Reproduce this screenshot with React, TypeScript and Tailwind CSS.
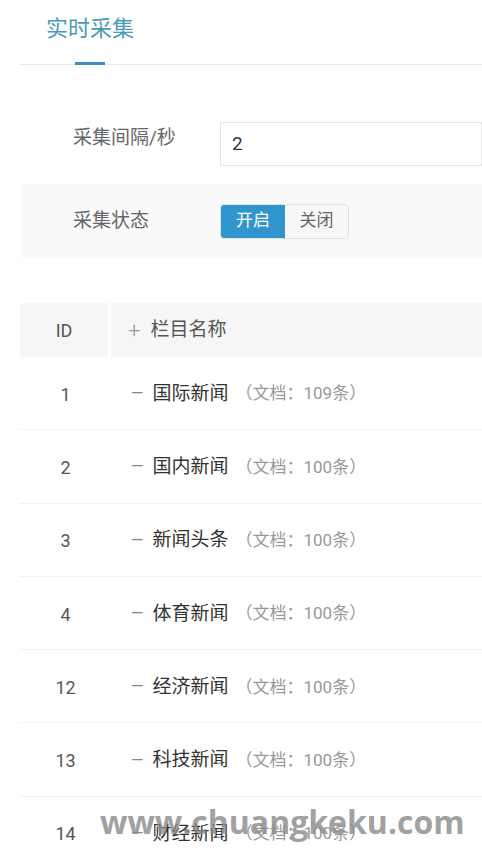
import React from 'react';

const rows = [
  { id: 1, name: '国际新闻', count: 109 },
  { id: 2, name: '国内新闻', count: 100 },
  { id: 3, name: '新闻头条', count: 100 },
  { id: 4, name: '体育新闻', count: 100 },
  { id: 12, name: '经济新闻', count: 100 },
  { id: 13, name: '科技新闻', count: 100 },
  { id: 14, name: '财经新闻', count: 100 },
];

const App = () => {
  return (
    <div
      className="relative h-[850px] w-[482px] overflow-hidden bg-white pl-[20px]"
      style={{ fontFamily: 'Roboto, "Noto Sans CJK SC", sans-serif' }}
    >
      {/* tabs */}
      <div className="flex h-[65px] border-b border-[#e8e8e8]">
        <div className="relative ml-[26px] pt-[14px]">
          <span className="text-[22px] leading-[30px] text-[#4a9bb8]">实时采集</span>
          <div className="absolute bottom-[-1px] left-1/2 h-[3px] w-[30px] -translate-x-1/2 bg-[#3d8fbf]" />
        </div>
      </div>

      {/* form */}
      <div className="mt-[45px]">
        <div className="flex h-[74px] items-start">
          <div className="w-[200px] pl-[53px] pt-[14px] text-[19px] leading-[28px] text-[#666]">采集间隔/秒</div>
          <div className="mt-[12px] flex h-[44px] flex-1 items-center border border-[#e6e6e6] pl-[11px] text-[19px] text-[#333]">
            2
          </div>
        </div>
        <div className="flex h-[74px] items-center bg-[#fafafa]">
          <div className="w-[200px] pl-[53px] text-[19px] text-[#666]">采集状态</div>
          <div className="flex h-[35px] overflow-hidden rounded-[4px] border border-[#e0e0e0]">
            <div className="flex w-[64px] items-center justify-center bg-[#2f95cc] text-[17px] text-white">开启</div>
            <div className="flex w-[63px] items-center justify-center bg-[#f7f7f7] text-[17px] text-[#666]">关闭</div>
          </div>
        </div>
      </div>

      {/* table */}
      <div className="mt-[45px]">
        <div className="flex h-[54px] gap-[3px]">
          <div className="flex w-[88px] items-center justify-center bg-[#f6f6f6] text-[18px] text-[#555]">ID</div>
          <div className="flex flex-1 items-center bg-[#f6f6f6] pl-[17px] text-[19px] text-[#555]">
            <span className="mr-[10px] text-[22px] font-light text-[#999]">+</span>
            栏目名称
          </div>
        </div>
        {rows.map((row) => (
          <div key={row.id} className="flex h-[73.3px] items-center border-b border-[#f2f2f2] pt-[2px]">
            <div className="w-[91px] text-center text-[18px] text-[#555]">{row.id}</div>
            <div className="flex items-center pl-[20px]">
              <span className="mr-[9px] text-[16px] text-[#888]">—</span>
              <span className="text-[19px] text-[#333]">{row.name}</span>
              <span className="ml-[7px] text-[17px] text-[#999]">（文档：{row.count}条）</span>
            </div>
          </div>
        ))}
      </div>

      {/* watermark */}
      <div
        className="absolute left-[100px] top-[798px] text-[32px] font-bold text-[#8a8a8a] opacity-80"
        style={{ fontFamily: '"Open Sans", sans-serif' }}
      >
        www.chuangkeku.com
      </div>
    </div>
  );
};

export default App;
